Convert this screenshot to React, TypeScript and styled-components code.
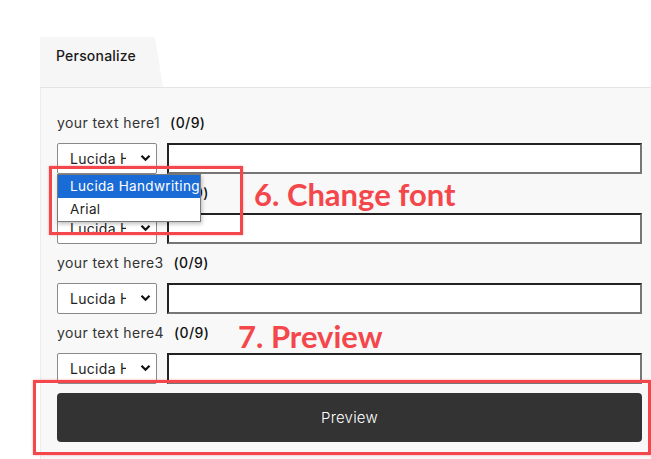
import styled, { createGlobalStyle } from "styled-components";

const fields = [
  { label: "your text here1", font: "Lucida Handwriting" },
  { label: "your text here2", font: "Lucida Handwriting" },
  { label: "your text here3", font: "Lucida Handwriting" },
  { label: "your text here4", font: "Lucida Handwriting" },
];

function Chevron() {
  return (
    <svg width="11" height="8" viewBox="0 0 11 8">
      <path d="M1.5 1.8 L5.5 5.8 L9.5 1.8" fill="none" stroke="#111" strokeWidth="2.2" />
    </svg>
  );
}

function App() {
  return (
    <>
      <GlobalStyle />
      <Page>
        <Tab>Personalize</Tab>
        <Panel>
          {fields.map((field, index) => (
            <Row key={index}>
              <Label>
                {field.label}
                <Count>(0/9)</Count>
              </Label>
              <Controls>
                <SelectWrap>
                  <FontSelect defaultValue={field.font}>
                    <option>Lucida Handwriting</option>
                    <option>Arial</option>
                  </FontSelect>
                  <Arrow>
                    <Chevron />
                  </Arrow>
                  {index === 0 && (
                    <Dropdown>
                      <Option active>Lucida Handwriting</Option>
                      <Option>Arial</Option>
                    </Dropdown>
                  )}
                </SelectWrap>
                <TextInput />
              </Controls>
            </Row>
          ))}
          <PreviewButton>Preview</PreviewButton>
        </Panel>

        <Callout style={{ left: 49, top: 166, width: 194, height: 69 }} />
        <Note style={{ left: 254, top: 174 }}>6. Change font</Note>
        <Note style={{ left: 238, top: 316 }}>7. Preview</Note>
        <Callout style={{ left: 33, top: 380, width: 618, height: 75 }} />
      </Page>
    </>
  );
}

export default App;

const GlobalStyle = createGlobalStyle`
  body {
    margin: 0;
    background: #ffffff;
    font-family: Inter, "Open Sans", sans-serif;
    color: #222;
    overflow: hidden;
  }
`;

const Page = styled.div`
  position: relative;
  width: 651px;
  height: 459px;
  padding: 37px 0 0 40px;
  box-sizing: border-box;
`;

const Tab = styled.div`
  width: 123px;
  height: 50px;
  box-sizing: border-box;
  padding: 10px 0 0 16px;
  background: #f6f6f6;
  clip-path: polygon(0 0, 115px 0, 100% 100%, 0 100%);
  font-size: 14px;
  font-weight: 500;
  letter-spacing: 0.2px;
  color: #1a1a1a;
`;

const Panel = styled.div`
  width: 620px;
  box-sizing: border-box;
  background: #f8f8f8;
  border-top: 1px solid #e4e4e4;
  border-left: 1px solid #ececec;
  padding: 25px 18px 20px 16px;
`;

const Row = styled.div`
  display: flex;
  flex-direction: column;
  gap: 10px;
  margin-bottom: 9px;
`;

const Label = styled.div`
  height: 20px;
  line-height: 20px;
  font-size: 14px;
  letter-spacing: 0.4px;
  color: #333;
`;

const Count = styled.span`
  margin-left: 10px;
  font-weight: 500;
  color: #111;
`;

const Controls = styled.div`
  display: flex;
  gap: 10px;
  height: 31px;
`;

const SelectWrap = styled.div`
  position: relative;
  width: 100px;
  flex: none;
`;

const FontSelect = styled.select`
  appearance: none;
  width: 100%;
  height: 31px;
  box-sizing: border-box;
  border: 1px solid #8a8a8a;
  border-radius: 2px;
  background: #ffffff;
  padding: 0 30px 0 12px;
  font-family: Inter, "Open Sans", sans-serif;
  font-size: 14px;
  letter-spacing: 0.3px;
  color: #222;
`;

const Arrow = styled.span`
  position: absolute;
  right: 3px;
  top: 8px;
  width: 18px;
  height: 14px;
  display: flex;
  align-items: center;
  justify-content: center;
  background: #ffffff;
  pointer-events: none;
`;

const Dropdown = styled.div`
  position: absolute;
  left: 0;
  top: 31px;
  width: 144px;
  box-sizing: border-box;
  background: #ffffff;
  border: 1px solid #7a7a7a;
  box-shadow: 1px 2px 4px rgba(0, 0, 0, 0.25);
  z-index: 2;
`;

const Option = styled.div<{ active?: boolean }>`
  height: 23px;
  line-height: 23px;
  padding-left: 12px;
  font-size: 13.5px;
  letter-spacing: 0.35px;
  white-space: nowrap;
  overflow: hidden;
  background: ${(p) => (p.active ? "#1a6bd6" : "#ffffff")};
  color: ${(p) => (p.active ? "#ffffff" : "#222")};
`;

const TextInput = styled.input`
  flex: 1;
  height: 31px;
  box-sizing: border-box;
  background: #ffffff;
  border-style: solid;
  border-width: 2px;
  border-color: #222 #767676 #767676 #222;
`;

const PreviewButton = styled.button`
  display: block;
  width: 100%;
  height: 49px;
  border: none;
  border-radius: 4px;
  background: #333333;
  color: #ffffff;
  font-family: Inter, "Open Sans", sans-serif;
  font-size: 15px;
  font-weight: 300;
  letter-spacing: 0.2px;
`;

const Callout = styled.div`
  position: absolute;
  box-sizing: border-box;
  border: 3px solid #f4474c;
  box-shadow: 0 0 2px rgba(244, 71, 76, 0.5);
  z-index: 3;
  pointer-events: none;
`;

const Note = styled.div`
  position: absolute;
  font-family: Lato, "Noto Sans", sans-serif;
  font-weight: 700;
  font-size: 31px;
  line-height: 40px;
  color: #f4474c;
  white-space: nowrap;
  z-index: 3;
`;
